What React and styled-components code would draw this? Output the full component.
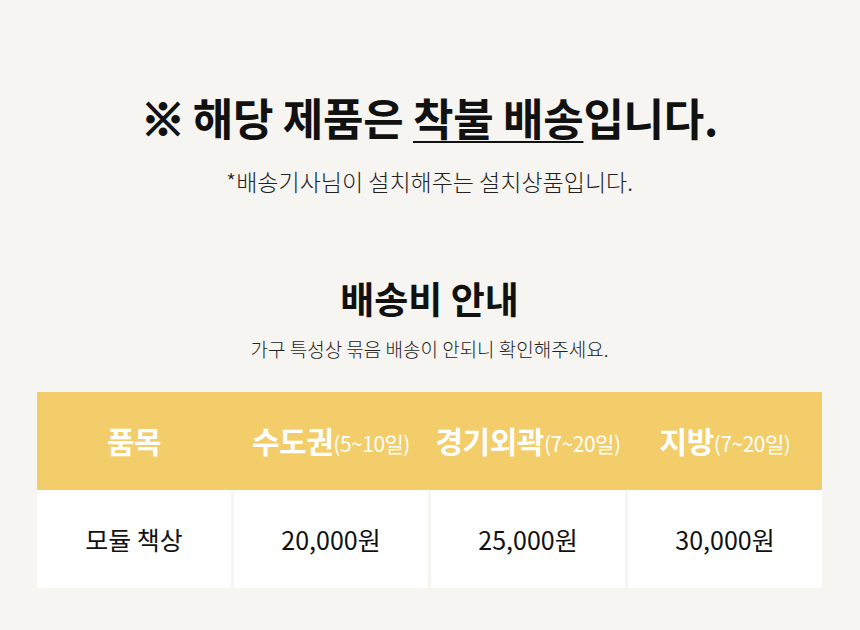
import styled, { createGlobalStyle } from "styled-components";

const GlobalStyle = createGlobalStyle`
  html, body {
    margin: 0;
    padding: 0;
    background: #f6f5f1;
    font-family: "Noto Sans CJK KR", "Noto Sans", sans-serif;
    color: #111;
  }
`;

const Page = styled.main`
  display: flex;
  flex-direction: column;
  align-items: center;
  padding: 87px 38px 42px 37px;
`;

const Notice = styled.h1`
  margin: 0;
  font-size: 44px;
  font-weight: 700;
  line-height: 60px;
  letter-spacing: -0.3px;
  color: #111;
`;

const Mark = styled.span`
  font-weight: 900;
  -webkit-text-stroke: 2px #111;
  margin-right: 8px;
`;

const Under = styled.span`
  text-decoration: underline;
  text-decoration-thickness: 2px;
  text-underline-offset: 5px;
`;

const NoticeSub = styled.p`
  margin: 19px 0 0;
  font-size: 23px;
  font-weight: 300;
  line-height: 30px;
  color: #222;
`;

const SectionTitle = styled.h2`
  margin: 77px 0 0;
  font-size: 37px;
  font-weight: 700;
  line-height: 50px;
`;

const SectionSub = styled.p`
  margin: 13px 0 0;
  font-size: 19px;
  font-weight: 300;
  line-height: 26px;
  color: #222;
`;

const Table = styled.div`
  align-self: stretch;
  margin-top: 30px;
  display: flex;
  flex-direction: column;
`;

const Row = styled.div`
  display: grid;
  grid-template-columns: repeat(4, 1fr);
  column-gap: 3px;
  height: 98px;
  background: ${(p) => (p.$head ? "#f2cd6a" : "transparent")};
`;

const HeadCell = styled.div`
  display: flex;
  align-items: center;
  justify-content: center;
  color: #fff;
  font-size: 30px;
  font-weight: 700;
  letter-spacing: -0.5px;
  padding-bottom: 2px;
`;

const Small = styled.span`
  font-size: 21px;
  font-weight: 400;
  margin-top: 5px;
`;

const Cell = styled.div`
  display: flex;
  align-items: center;
  justify-content: center;
  background: #fff;
  font-size: 25px;
  color: #111;
`;

const rows = [
  { name: "모듈 책상", prices: ["20,000원", "25,000원", "30,000원"] },
];

export default function App() {
  return (
    <>
      <GlobalStyle />
      <Page>
        <Notice>
          <Mark>※</Mark>해당 제품은 <Under>착불 배송</Under>입니다.
        </Notice>
        <NoticeSub>*배송기사님이 설치해주는 설치상품입니다.</NoticeSub>

        <SectionTitle>배송비 안내</SectionTitle>
        <SectionSub>가구 특성상 묶음 배송이 안되니 확인해주세요.</SectionSub>

        <Table>
          <Row $head>
            <HeadCell>품목</HeadCell>
            <HeadCell>
              수도권<Small>(5~10일)</Small>
            </HeadCell>
            <HeadCell>
              경기외곽<Small>(7~20일)</Small>
            </HeadCell>
            <HeadCell>
              지방<Small>(7~20일)</Small>
            </HeadCell>
          </Row>
          {rows.map((row) => (
            <Row key={row.name}>
              <Cell>{row.name}</Cell>
              {row.prices.map((p) => (
                <Cell key={p}>{p}</Cell>
              ))}
            </Row>
          ))}
        </Table>
      </Page>
    </>
  );
}
